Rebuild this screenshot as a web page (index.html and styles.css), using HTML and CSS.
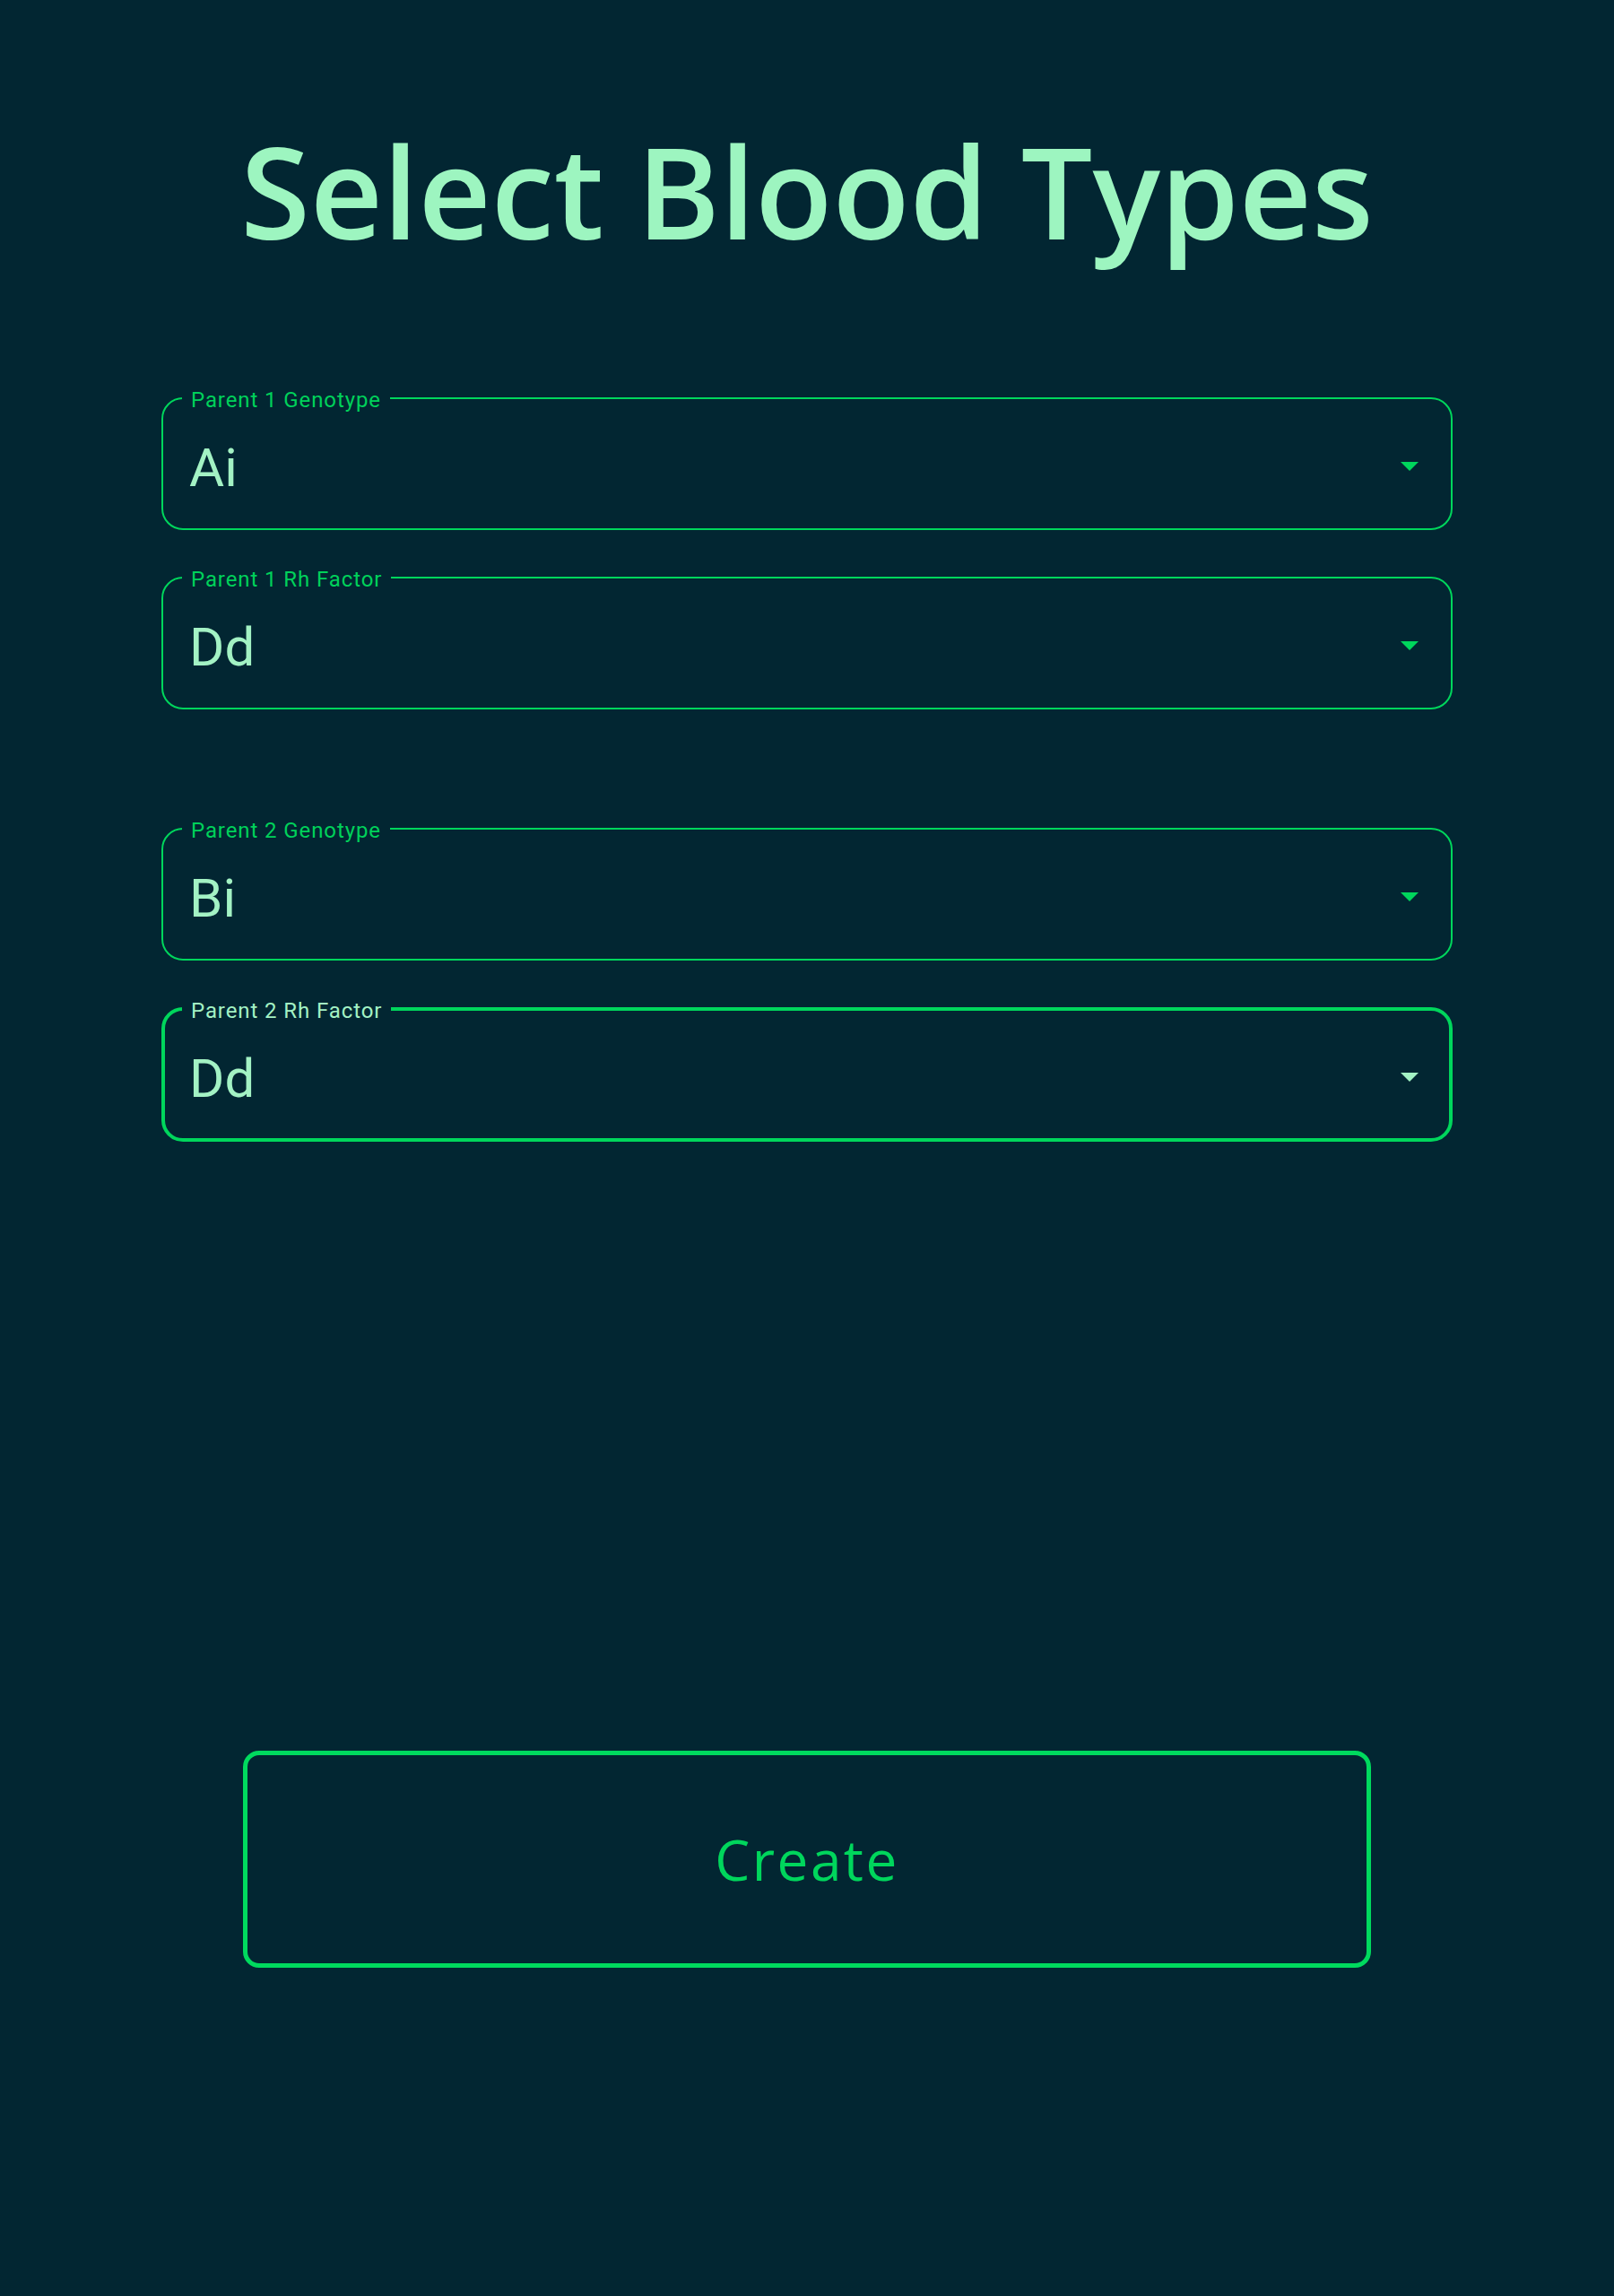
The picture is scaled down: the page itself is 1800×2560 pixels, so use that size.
FILE: index.html
```html
<!DOCTYPE html>
<html>
<head>
<meta charset="UTF-8">
<title>Select Blood Types</title>
<link rel="stylesheet" href="styles.css">
</head>
<body>
<main class="page">
  <h1 class="title">Select Blood Types</h1>

  <form class="form" onsubmit="return false;">
    <div class="parent_group">
      <fieldset class="field">
        <legend class="field_label">Parent 1 Genotype</legend>
        <div class="field_row">
          <span class="field_value">Ai</span>
          <span class="caret"></span>
        </div>
      </fieldset>
      <fieldset class="field">
        <legend class="field_label">Parent 1 Rh Factor</legend>
        <div class="field_row">
          <span class="field_value">Dd</span>
          <span class="caret"></span>
        </div>
      </fieldset>
    </div>

    <div class="parent_group">
      <fieldset class="field">
        <legend class="field_label">Parent 2 Genotype</legend>
        <div class="field_row">
          <span class="field_value">Bi</span>
          <span class="caret"></span>
        </div>
      </fieldset>
      <fieldset class="field field_focused">
        <legend class="field_label">Parent 2 Rh Factor</legend>
        <div class="field_row">
          <span class="field_value">Dd</span>
          <span class="caret"></span>
        </div>
      </fieldset>
    </div>

    <div class="actions">
      <button type="button" class="create_button">Create</button>
    </div>
  </form>
</main>
</body>
</html>
```

FILE: styles.css
```css
html, body {
  margin: 0px;
  height: 100%;
}

body {
  background: #022632;
  font-family: Roboto, "Liberation Sans", sans-serif;
}

.page {
  padding: 128px 180px 0;
}

.title {
  margin: 0;
  font: 600 141px/169px "Open Sans", "DejaVu Sans", sans-serif;
  color: #9df5c0;
  text-align: center;
}

.form {
  margin-top: 131px;
}

.parent_group {
  display: flex;
  flex-direction: column;
  gap: 37px;
}

.parent_group + .parent_group {
  margin-top: 117px;
}

/* outlined select, the legend cuts the notch in the top border */
.field {
  margin: 0;
  padding: 0 36px 6px 29px;
  border: 2px solid #00d65c;
  border-radius: 24px;
  min-width: 0;
}

.field_label {
  margin-left: -8px;
  padding: 4px 10px 0;
  font: 400 24px/28px Roboto, "Liberation Sans", sans-serif;
  letter-spacing: 0.9px;
  color: #00d15a;
}

.field_row {
  height: 123px;
  display: flex;
  align-items: center;
  justify-content: space-between;
}

.field_value {
  font: 400 60px/1 Roboto, "Liberation Sans", sans-serif;
  color: #a3f2c4;
}

.caret {
  width: 0;
  height: 0;
  margin-top: -4px;
  border-left: 10px solid transparent;
  border-right: 10px solid transparent;
  border-top: 10px solid #00d65c;
}

.field_focused {
  margin-top: 1px;
  padding: 0 34px 5px 27px;
  border-width: 4px;
}

.field_focused .field_label {
  color: #a3f2c4;
}

.field_focused .caret {
  border-top-color: #a3f2c4;
}

.actions {
  margin-top: 679px;
  padding: 0 91px;
}

.create_button {
  display: block;
  width: 100%;
  height: 242px;
  margin: 0;
  padding: 0;
  border: 5px solid #00da5e;
  border-radius: 18px;
  background: transparent;
  font: 400 62px/1 "Open Sans", "DejaVu Sans", sans-serif;
  letter-spacing: 2.5px;
  color: #00d65c;
  cursor: pointer;
}
```
